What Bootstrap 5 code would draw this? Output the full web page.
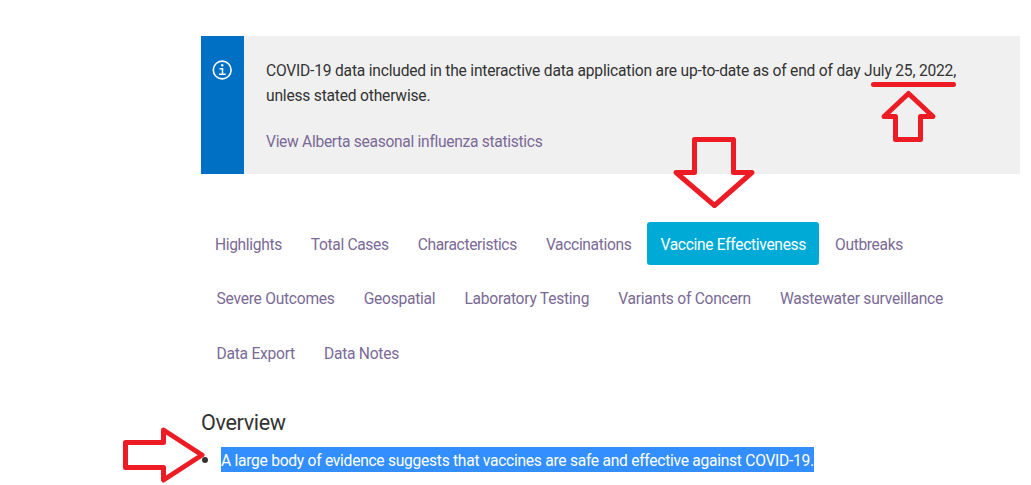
<!DOCTYPE html>
<html lang="en">
<head>
    <meta charset="UTF-8">
    <meta name="viewport" content="width=device-width, initial-scale=1.0">
    <title>COVID-19 Alberta statistics</title>
    <link href="https://cdn.jsdelivr.net/npm/bootstrap@5.3.0/dist/css/bootstrap.min.css" rel="stylesheet">
    <style>
        body {
            font-family: Roboto, "Liberation Sans", sans-serif;
            font-size: 15.6px;
            line-height: 25px;
            letter-spacing: -0.27px;
            color: #333;
            overflow: hidden;
        }
        a { color: #7a6a96; text-decoration: none; }
        .page { width: 819px; margin-left: 201px; padding-top: 36px; }
        .notice { height: 138px; background: #f0f0f0; }
        .notice-icon { width: 43px; background: #0070c4; padding-top: 24px; }
        .notice-text { padding: 23px 0 0 22px; }
        .notice-text p { margin-bottom: 21px; letter-spacing: -0.2px; }
        .notice-text a { letter-spacing: -0.3px; }
        .tabs { margin-top: 48px; }
        .tabs .nav { gap: 3px; padding-left: 1px; letter-spacing: -0.35px; }
        .tabs .nav + .nav { margin-top: 11px; padding-left: 2.5px; letter-spacing: -0.25px; }
        .tabs .nav:last-child { margin-top: 12px; }
        .tabs .nav-link {
            height: 43px;
            padding: 11px 13px 7px;
            color: #7a6a96;
            border-radius: 3px;
            white-space: nowrap;
        }
        .tabs .nav-link.active { background: #00aad6; color: #fff; letter-spacing: -0.32px; }
        .overview { font-size: 21.6px; line-height: 28px; font-weight: 400; letter-spacing: -0.35px; margin: 35px 0 10px; }
        .facts { list-style: none; padding: 0; }
        .facts li::before {
            content: "";
            width: 6px;
            height: 6px;
            margin: 1px 13px 0 1px;
            border-radius: 50%;
            background: #333;
        }
        .selected { height: 25px; line-height: 28px; background: #338fff; color: #fff; white-space: nowrap; }
        .marks { left: 0; top: 0; pointer-events: none; }
    </style>
</head>
<body>
    <main class="page">
        <div class="notice d-flex">
            <div class="notice-icon flex-shrink-0">
                <svg class="d-block mx-auto" width="21" height="20" viewBox="0 0 21 20" fill="none" stroke="#fff">
                    <circle cx="10.200" cy="10" r="8.900" stroke-width="1.6"/>
                    <path d="M7.500 8.700h3v5.300M7 14.200h6.700" stroke-width="1.5"/>
                    <circle cx="10.200" cy="5.300" r="1.2" fill="#fff" stroke="none"/>
                </svg>
            </div>
            <div class="notice-text">
                <p>COVID-19 data included in the interactive data application are up-to-date as of end of day July 25, 2022,<br>unless stated otherwise.</p>
                <a href="#">View Alberta seasonal influenza statistics</a>
            </div>
        </div>

        <div class="tabs d-flex flex-column">
            <ul class="nav nav-pills flex-nowrap">
                <li class="nav-item"><a class="nav-link" href="#">Highlights</a></li>
                <li class="nav-item"><a class="nav-link" href="#">Total Cases</a></li>
                <li class="nav-item"><a class="nav-link" href="#">Characteristics</a></li>
                <li class="nav-item"><a class="nav-link" href="#">Vaccinations</a></li>
                <li class="nav-item"><a class="nav-link active" href="#">Vaccine Effectiveness</a></li>
                <li class="nav-item"><a class="nav-link" href="#">Outbreaks</a></li>
            </ul>
            <ul class="nav nav-pills flex-nowrap">
                <li class="nav-item"><a class="nav-link" href="#">Severe Outcomes</a></li>
                <li class="nav-item"><a class="nav-link" href="#">Geospatial</a></li>
                <li class="nav-item"><a class="nav-link" href="#">Laboratory Testing</a></li>
                <li class="nav-item"><a class="nav-link" href="#">Variants of Concern</a></li>
                <li class="nav-item"><a class="nav-link" href="#">Wastewater surveillance</a></li>
            </ul>
            <ul class="nav nav-pills flex-nowrap">
                <li class="nav-item"><a class="nav-link" href="#">Data Export</a></li>
                <li class="nav-item"><a class="nav-link" href="#">Data Notes</a></li>
            </ul>
        </div>

        <h2 class="overview">Overview</h2>
        <ul class="facts">
            <li class="d-flex align-items-center"><span class="selected">A large body of evidence suggests that vaccines are safe and effective against COVID-19.</span></li>
        </ul>
    </main>

    <!-- red pointers drawn over the page -->
    <svg class="marks position-absolute" width="1031" height="485" fill="none" stroke="#ed1c24" stroke-width="5" stroke-linejoin="round" stroke-linecap="round">
        <path d="M873.5 84.5H953.5"/>
        <path d="M908.500 93.500L933 116.500H920.500V139.500H895.500V116.500H884Z"/>
        <path d="M694.500 139.500H733.500V172.500H752L714.500 205.500L676 172.500H694.500Z"/>
        <path d="M125.500 442.500H163.500V430L202 455L163.500 480V467.500H125.500Z"/>
    </svg>
    <script src="https://cdn.jsdelivr.net/npm/bootstrap@5.3.0/dist/js/bootstrap.bundle.min.js"></script>
</body>
</html>
